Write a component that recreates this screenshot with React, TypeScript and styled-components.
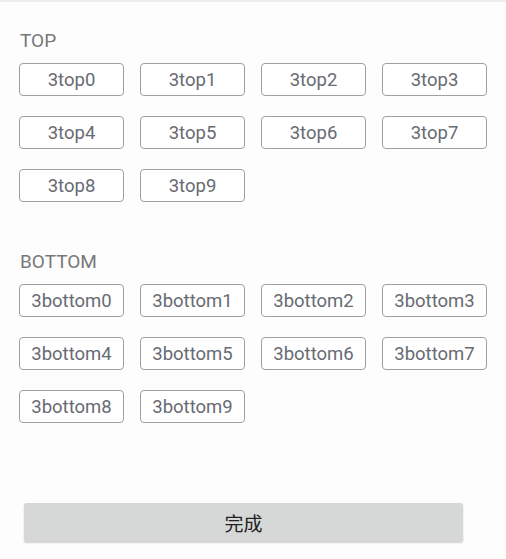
import React from 'react';
import styled, { createGlobalStyle } from 'styled-components';

const GlobalStyle = createGlobalStyle`
  html, body {
    margin: 0;
    padding: 0;
    background: #fdfdfd;
  }
  body {
    font-family: Roboto, "Noto Sans", "Noto Sans CJK SC", sans-serif;
  }
`;

const Page = styled.div`
  min-height: 100vh;
  box-sizing: border-box;
  display: flex;
  flex-direction: column;
  border-top: 2px solid #ececec;
  padding-top: 28px;
`;

const Section = styled.section`
  padding: 0 19px;
  & + & {
    margin-top: 49px;
  }
`;

const Label = styled.div`
  font-size: 19px;
  line-height: 22px;
  color: #787878;
  margin-bottom: 11px;
  padding-left: 1px;
`;

const TagGrid = styled.div`
  display: grid;
  grid-template-columns: repeat(4, 105px);
  column-gap: 16px;
  row-gap: 20px;
`;

const Tag = styled.button`
  height: 33px;
  box-sizing: border-box;
  border: 1px solid #9d9fa2;
  border-radius: 4px;
  background: #fff;
  color: #676b72;
  font-family: Roboto, "Noto Sans", sans-serif;
  font-size: 18.5px;
  padding: 0;
  display: flex;
  align-items: center;
  justify-content: center;
  white-space: nowrap;
`;

const Footer = styled.div`
  margin-top: auto;
  padding: 0 43px 18px 24px;
`;

const DoneButton = styled.button`
  width: 100%;
  height: 38px;
  border: none;
  border-radius: 2px;
  background: #d6d7d7;
  box-shadow: 0 2px 2px rgba(0, 0, 0, 0.18);
  color: #222;
  font-family: "Noto Sans CJK SC", sans-serif;
  font-size: 19px;
  display: flex;
  align-items: center;
  justify-content: center;
`;

const sections = [
  { title: 'TOP', prefix: '3top' },
  { title: 'BOTTOM', prefix: '3bottom' },
];

function App() {
  return (
    <>
      <GlobalStyle />
      <Page>
        {sections.map((s) => (
          <Section key={s.title}>
            <Label>{s.title}</Label>
            <TagGrid>
              {Array.from({ length: 10 }, (_, i) => (
                <Tag key={i}>{s.prefix + i}</Tag>
              ))}
            </TagGrid>
          </Section>
        ))}
        <Footer>
          <DoneButton>完成</DoneButton>
        </Footer>
      </Page>
    </>
  );
}

export default App;
